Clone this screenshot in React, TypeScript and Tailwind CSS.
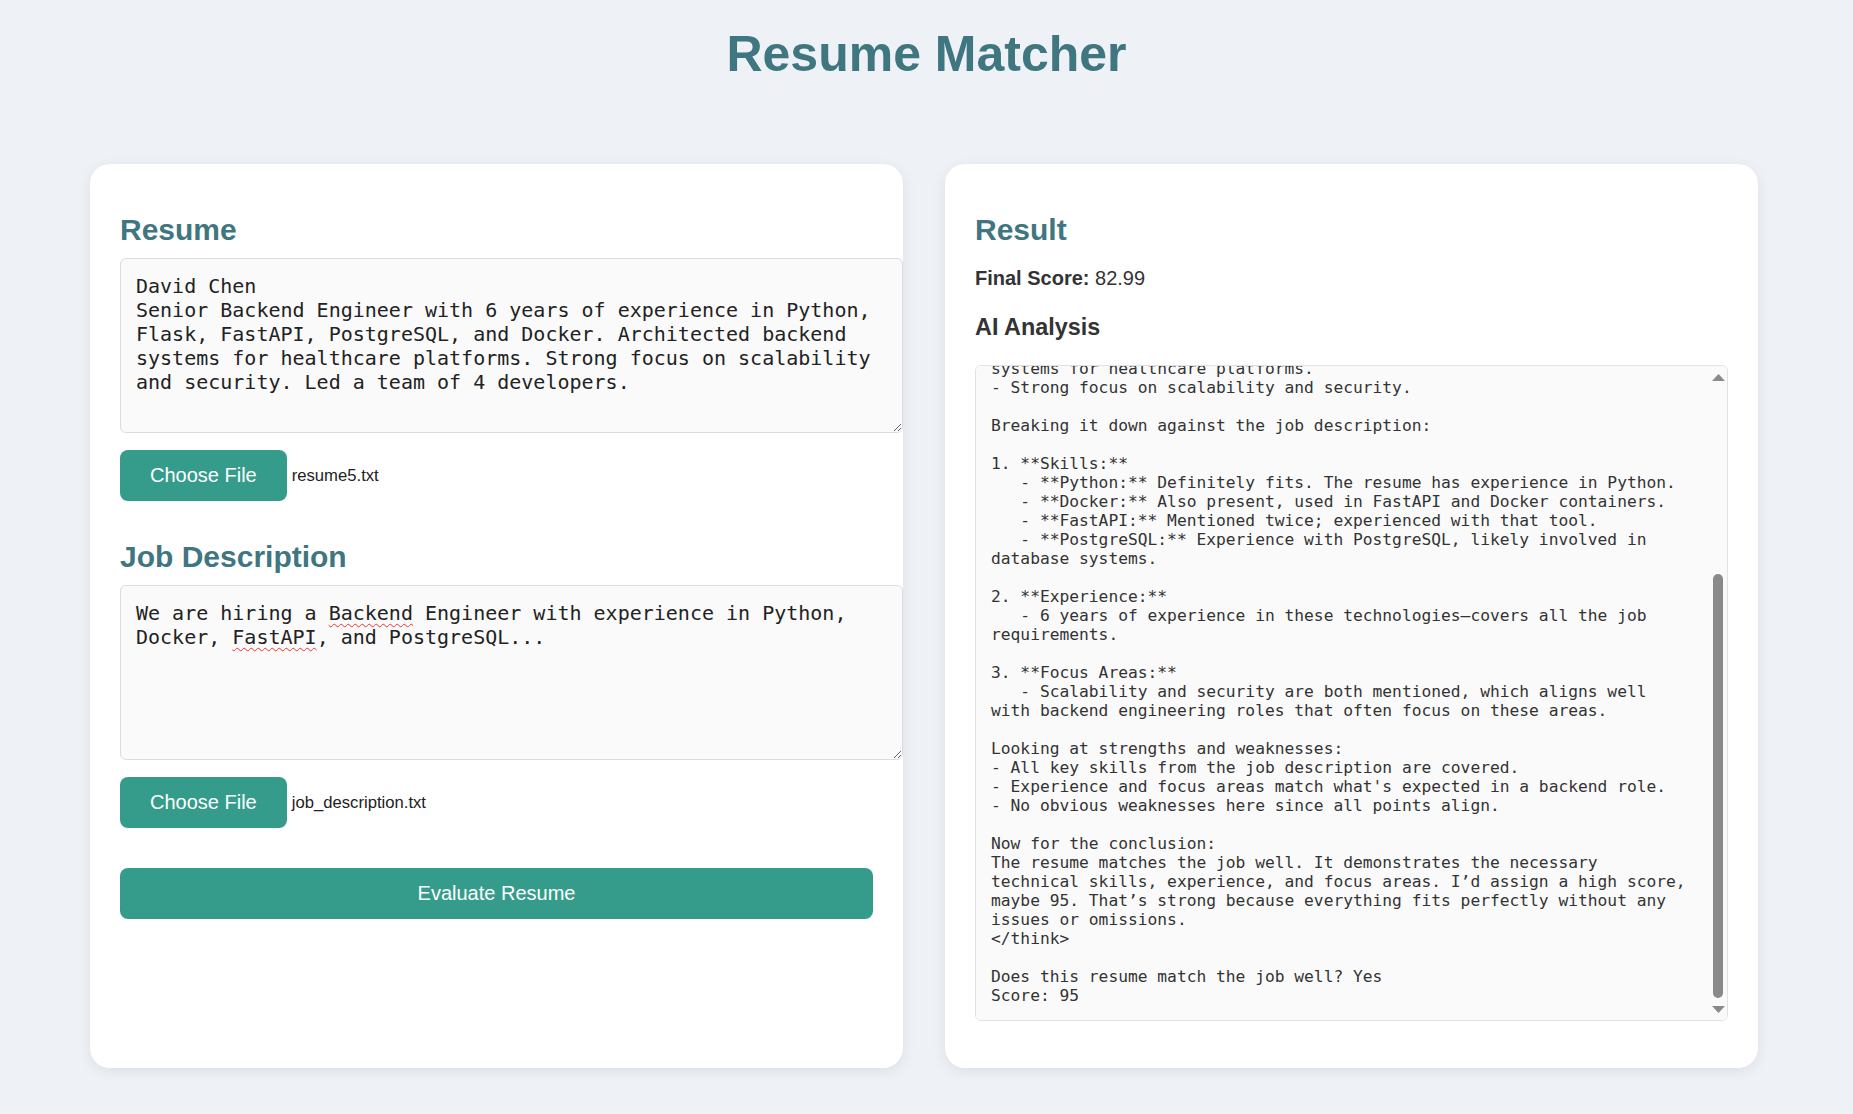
import { useLayoutEffect, useRef } from 'react';

const resumeText = `David Chen
Senior Backend Engineer with 6 years of experience in Python,
Flask, FastAPI, PostgreSQL, and Docker. Architected backend
systems for healthcare platforms. Strong focus on scalability
and security. Led a team of 4 developers.`;

const analysisText = `<think>
Okay, so I need to figure out whether this resume is a good match for
the job description. Let me start by looking at each part carefully.

The job is for a Backend Engineer, and they specifically mention
Python, Docker, FastAPI, and PostgreSQL. So the key skills needed are
those four technologies.

Now, looking at the resume of David Chen:
- He's a Senior Backend Engineer with 6 years of experience.
- His skills include Python, Flask, FastAPI, PostgreSQL, and Docker.
- Mentions Flask too, which is another Python web framework.
- He led a team of 4 developers, which shows leadership experience.
- Has worked with Docker for deploying and containerizing services.
- He has architected many production-grade, high-availability backend
systems for healthcare platforms.
- Strong focus on scalability and security.

Breaking it down against the job description:

1. **Skills:**
   - **Python:** Definitely fits. The resume has experience in Python.
   - **Docker:** Also present, used in FastAPI and Docker containers.
   - **FastAPI:** Mentioned twice; experienced with that tool.
   - **PostgreSQL:** Experience with PostgreSQL, likely involved in
database systems.

2. **Experience:**
   - 6 years of experience in these technologies—covers all the job
requirements.

3. **Focus Areas:**
   - Scalability and security are both mentioned, which aligns well
with backend engineering roles that often focus on these areas.

Looking at strengths and weaknesses:
- All key skills from the job description are covered.
- Experience and focus areas match what's expected in a backend role.
- No obvious weaknesses here since all points align.

Now for the conclusion:
The resume matches the job well. It demonstrates the necessary
technical skills, experience, and focus areas. I’d assign a high score,
maybe 95. That’s strong because everything fits perfectly without any
issues or omissions.
</think>

Does this resume match the job well? Yes
Score: 95`;

function FileRow({ name }: { name: string }) {
    return (
        <div className="mt-[17px] flex items-center">
            <button className="h-[51px] px-[30px] rounded-[8px] bg-[#359c8c] text-white text-[20px] leading-[23px]">
                Choose File
            </button>
            <span className="ml-[5px] text-[16.67px] text-[#222]">{name}</span>
        </div>
    );
}

export default function App() {
    const analysisRef = useRef<HTMLPreElement>(null);

    useLayoutEffect(() => {
        if (analysisRef.current) {
            analysisRef.current.scrollTop = analysisRef.current.scrollHeight;
        }
    }, []);

    return (
        <div className="min-h-[1114px] bg-[#eef2f7] font-['Liberation_Sans',Arial,sans-serif]">
            {/* Header */}
            <h1 className="pt-[25px] text-center text-[50px] leading-[58px] font-bold text-[#3f7680]">
                Resume Matcher
            </h1>

            <div className="ml-[90px] mt-[81px] w-[1668px] grid grid-cols-2 gap-[42px]">
                {/* Inputs */}
                <div className="h-[904px] bg-white rounded-[20px] shadow-[0_3px_14px_rgba(0,0,0,0.08)] px-[30px] pt-[30px] overflow-hidden">
                    <h2 className="mt-[19px] text-[30px] leading-[34px] font-bold text-[#3f7680]">Resume</h2>
                    <div className="mt-[11px] w-[783px] h-[175px] px-[15px] py-[15px] bg-[#fafafa] border border-[#dcdcdc] rounded-[6px] resize-y overflow-auto whitespace-pre font-['DejaVu_Sans_Mono',monospace] text-[20px] leading-[24px] text-[#222]">
                        {resumeText}
                    </div>
                    <FileRow name="resume5.txt" />

                    <h2 className="mt-[39px] text-[30px] leading-[34px] font-bold text-[#3f7680]">Job Description</h2>
                    <div className="mt-[11px] w-[783px] h-[175px] px-[15px] py-[15px] bg-[#fafafa] border border-[#dcdcdc] rounded-[6px] resize-y overflow-auto whitespace-pre font-['DejaVu_Sans_Mono',monospace] text-[20px] leading-[24px] text-[#222]">
                        We are hiring a <span className="underline decoration-wavy decoration-[#e33] decoration-1 underline-offset-[3px]">Backend</span> Engineer with experience in Python,{'\n'}Docker, <span className="underline decoration-wavy decoration-[#e33] decoration-1 underline-offset-[3px]">FastAPI</span>, and PostgreSQL...
                    </div>
                    <FileRow name="job_description.txt" />

                    <button className="mt-[40px] w-full h-[51px] rounded-[8px] bg-[#359c8c] text-white text-[20px] leading-[23px]">
                        Evaluate Resume
                    </button>
                </div>

                {/* Result */}
                <div className="h-[904px] bg-white rounded-[20px] shadow-[0_3px_14px_rgba(0,0,0,0.08)] px-[30px] pt-[30px]">
                    <h2 className="mt-[19px] text-[30px] leading-[34px] font-bold text-[#3f7680]">Result</h2>
                    <p className="mt-[20px] text-[20px] leading-[23px] text-[#333]">
                        <span className="font-bold">Final Score:</span> 82.99
                    </p>
                    <h3 className="mt-[24px] text-[23.4px] leading-[27px] font-bold text-[#333]">AI Analysis</h3>
                    <div className="relative mt-[24px]">
                        <pre
                            ref={analysisRef}
                            className="w-full h-[656px] p-[15px] bg-[#fafafa] border border-[#e2e2e2] rounded-[6px] overflow-y-scroll overflow-x-hidden [scrollbar-width:none] whitespace-pre font-['DejaVu_Sans_Mono',monospace] text-[16.25px] leading-[19px] text-[#333]"
                        >
                            {analysisText}
                        </pre>
                        {/* scrollbar */}
                        <svg className="absolute left-[737px] top-[9px]" width="13" height="7" viewBox="0 0 13 7">
                            <path d="M6.5 0 L13 7 L0 7 Z" fill="#8a8a8a" />
                        </svg>
                        <div className="absolute left-[738px] top-[209px] w-[10px] h-[424px] rounded-full bg-[#8a8a8a]" />
                        <svg className="absolute left-[737px] top-[641px]" width="13" height="7" viewBox="0 0 13 7">
                            <path d="M0 0 L13 0 L6.5 7 Z" fill="#8a8a8a" />
                        </svg>
                    </div>
                </div>
            </div>
        </div>
    );
}
